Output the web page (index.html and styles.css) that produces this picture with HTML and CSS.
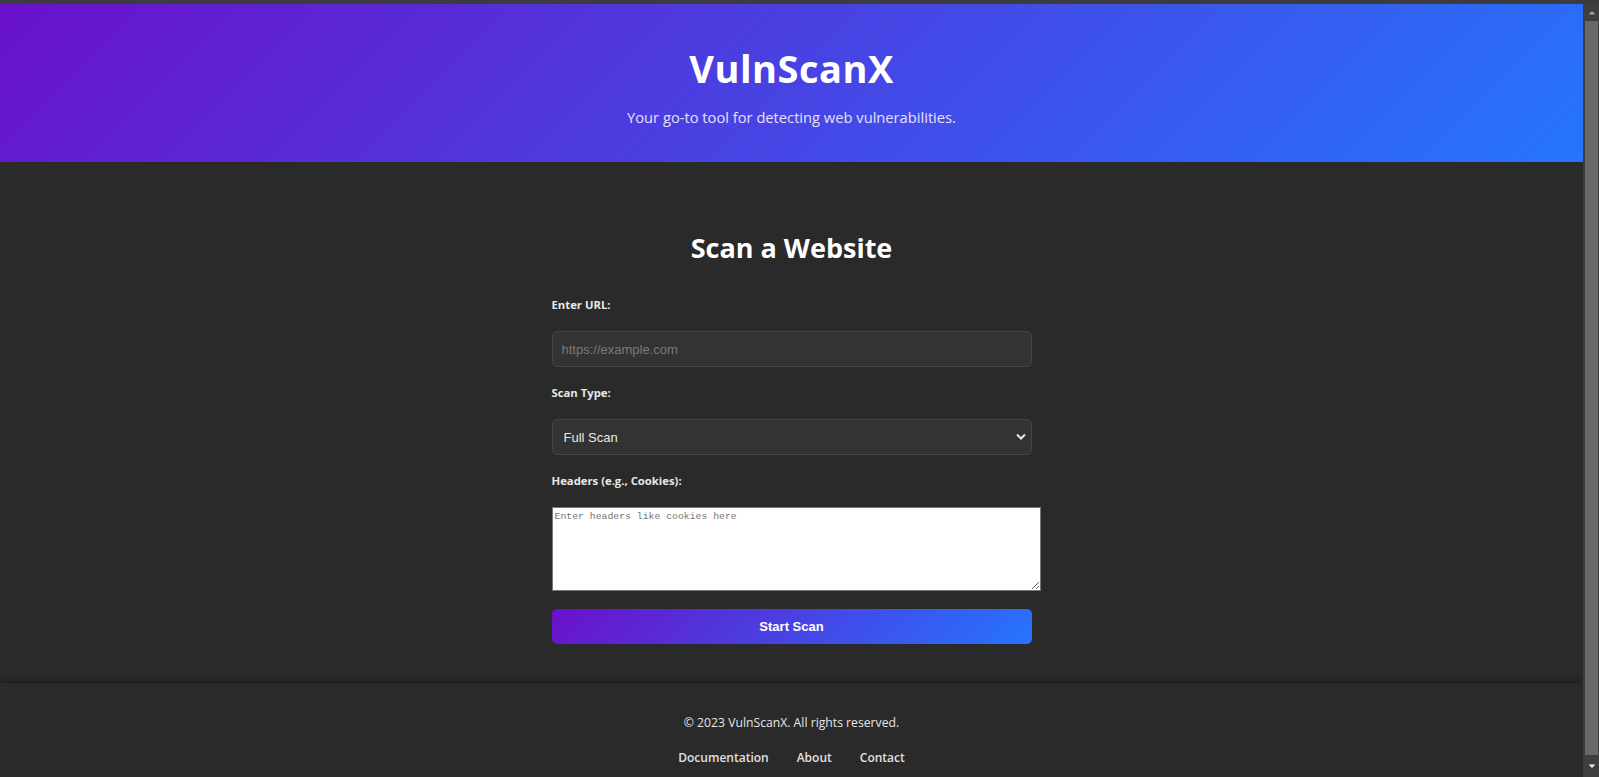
FILE: index.html
```html
<!DOCTYPE html>
<html lang="en">
<head>
<meta charset="UTF-8">
<title>VulnScanX</title>
<link rel="stylesheet" href="styles.css">
</head>
<body>
<div class="window">
  <div class="page">
    <header class="hero">
      <h1 class="hero-title">VulnScanX</h1>
      <p class="hero-sub">Your go-to tool for detecting web vulnerabilities.</p>
    </header>
    <main class="main">
      <section class="scan">
        <h2 class="scan-title">Scan a Website</h2>
        <form class="scan-form">
          <label class="field-label" for="url">Enter URL:</label>
          <input class="field-input" id="url" type="text" placeholder="https://example.com">
          <label class="field-label" for="type">Scan Type:</label>
          <div class="select-wrap">
            <select class="field-input field-select" id="type">
              <option>Full Scan</option>
              <option>Quick Scan</option>
            </select>
            <svg class="select-arrow" width="10" height="7" viewBox="0 0 10 7"><path d="M1 1.5 L5 5.5 L9 1.5" fill="none" stroke="#e8e8e8" stroke-width="2"/></svg>
          </div>
          <label class="field-label" for="headers">Headers (e.g., Cookies):</label>
          <textarea class="field-textarea" id="headers" rows="5" placeholder="Enter headers like cookies here"></textarea>
          <button class="scan-btn" type="button">Start Scan</button>
        </form>
      </section>
    </main>
    <footer class="footer">
      <p class="footer-copy">&copy; 2023 VulnScanX. All rights reserved.</p>
      <nav class="footer-links">
        <a href="#">Documentation</a>
        <a href="#">About</a>
        <a href="#">Contact</a>
      </nav>
    </footer>
  </div>
  <div class="scrollbar" aria-hidden="true">
    <div class="sb-btn sb-up"><svg width="8" height="5" viewBox="0 0 8 5"><polygon points="0.5,4.5 4,1 7.5,4.5" fill="#a0a0a0"/></svg></div>
    <div class="sb-track"><div class="sb-thumb"></div></div>
    <div class="sb-btn sb-down"><svg width="8" height="5" viewBox="0 0 8 5"><polygon points="0.5,0.5 7.5,0.5 4,4" fill="#ececec"/></svg></div>
  </div>
</div>
</body>
</html>
```

FILE: styles.css
```css
html {
  background: #2a2a2a;
}
body {
  margin: 0;
  border-top: 4px solid #3c3c3c;
  font-family: "Segoe UI", "Open Sans", "Noto Sans", sans-serif;
  color: #e0e0e0;
  background: #2a2a2a;
}
.window {
  display: flex;
  align-items: flex-start;
}
.page {
  flex: 1;
  min-width: 0;
}
.scrollbar {
  width: 16px;
  height: calc(100vh - 4px);
  display: flex;
  flex-direction: column;
  background: #3e3e3e;
}
.sb-btn {
  display: flex;
  align-items: center;
  justify-content: center;
  padding-left: 1px;
}
.sb-up {
  height: 17px;
}
.sb-down {
  height: 21px;
}
.sb-track {
  flex: 1;
  display: flex;
  padding: 0 1px 1px 2px;
}
.sb-thumb {
  flex: 1;
  background: #686868;
}
.hero {
  height: 158px;
  box-sizing: border-box;
  padding-top: 38px;
  text-align: center;
  color: #fff;
  background: linear-gradient(135deg, #6a11cb, #2575fc);
}
.hero-title {
  margin: 0;
  font-size: 38px;
  line-height: 52px;
  font-weight: 700;
  letter-spacing: 0.5px;
}
.hero-sub {
  margin: 13px 0 0;
  font-size: 14.7px;
  line-height: 20px;
  color: #e6e0f8;
}
.main {
  padding: 66px 20px 39px;
}
.scan {
  width: 480px;
  margin: 0 auto;
}
.scan-title {
  margin: 0 0 29px;
  text-align: center;
  font-size: 27px;
  line-height: 40px;
  color: #fff;
}
.scan-form {
  display: flex;
  flex-direction: column;
}
.field-label {
  font-size: 11.3px;
  line-height: 16px;
  font-weight: 700;
  color: #e8e8e8;
  margin-bottom: 18px;
}
.field-input {
  box-sizing: border-box;
  width: 100%;
  height: 36px;
  padding: 0 9px;
  margin-bottom: 18px;
  border: 1px solid #444;
  border-radius: 5px;
  background: #333;
  color: #e8e8e8;
  font-family: "Liberation Sans", Arial, sans-serif;
  font-size: 13px;
  outline: none;
}
.field-input::placeholder {
  color: #7a7a7a;
}
.select-wrap {
  position: relative;
}
.field-select {
  appearance: none;
  -webkit-appearance: none;
  padding-left: 11px;
}
.select-arrow {
  position: absolute;
  right: 6px;
  top: 14px;
}
.field-textarea {
  box-sizing: border-box;
  width: 489px;
  height: 84px;
  margin: 0 0 18px;
  padding: 2px;
  border: 1px solid #767676;
  background: #fff;
  color: #222;
  font-family: "Liberation Mono", monospace;
  font-size: 9.8px;
  line-height: 13px;
  resize: vertical;
}
.field-textarea::placeholder {
  color: #757575;
}
.scan-btn {
  height: 35px;
  border: none;
  border-radius: 5px;
  background: linear-gradient(135deg, #6a11cb, #2575fc);
  color: #fff;
  font-family: "Liberation Sans", Arial, sans-serif;
  font-size: 13px;
  font-weight: 700;
  cursor: pointer;
}
.footer {
  padding: 30px 20px 16px;
  text-align: center;
  background: #2a2a2a;
  box-shadow: 0 -2px 5px rgba(0, 0, 0, 0.3);
}
.footer-copy {
  margin: 0 0 15px;
  font-size: 12.2px;
  line-height: 20px;
  color: #e6e6e6;
}
.footer-links {
  display: flex;
  justify-content: center;
  gap: 28px;
}
.footer-links a {
  font-size: 12px;
  line-height: 20px;
  font-weight: 600;
  color: #e0e0e0;
  text-decoration: none;
}
```
